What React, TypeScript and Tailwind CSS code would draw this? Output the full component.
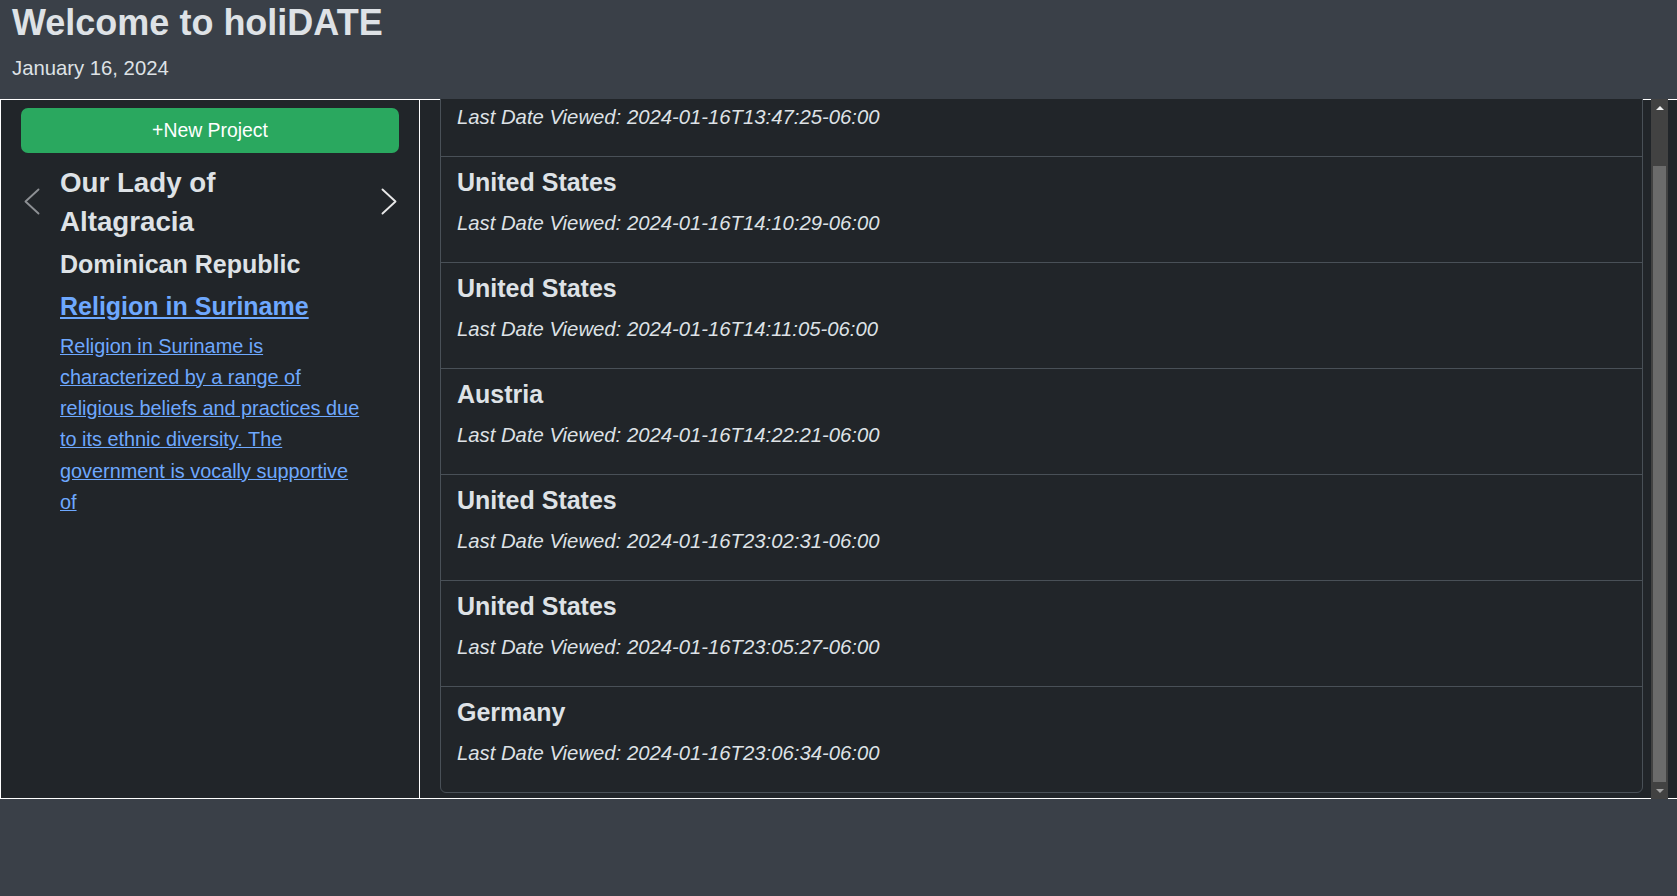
import { useEffect, useRef } from "react";

const rows = [
  { country: "United States", date: "2024-01-16T13:47:25-06:00" },
  { country: "United States", date: "2024-01-16T14:10:29-06:00" },
  { country: "United States", date: "2024-01-16T14:11:05-06:00" },
  { country: "Austria", date: "2024-01-16T14:22:21-06:00" },
  { country: "United States", date: "2024-01-16T23:02:31-06:00" },
  { country: "United States", date: "2024-01-16T23:05:27-06:00" },
  { country: "Germany", date: "2024-01-16T23:06:34-06:00" },
];

function Chevron({ dir, color }: { dir: "left" | "right"; color: string }) {
  return (
    <svg
      width="16"
      height="27"
      viewBox="0 0 16 27"
      fill="none"
      stroke={color}
      strokeWidth="1.9"
      strokeLinecap="round"
      strokeLinejoin="round"
    >
      {dir === "left" ? (
        <polyline points="14.5,1.5 1.5,13.5 14.5,25.5" />
      ) : (
        <polyline points="1.5,1.5 14.5,13.5 1.5,25.5" />
      )}
    </svg>
  );
}

export default function App() {
  const scrollRef = useRef<HTMLDivElement>(null);

  useEffect(() => {
    const el = scrollRef.current;
    if (el) el.scrollTop = el.scrollHeight;
  }, []);

  return (
    <div className="min-h-screen bg-[#3a4048] font-['Liberation_Sans',Arial,sans-serif] text-[#dee2e6]">
      <header className="h-[99px] pl-3 pt-[2px]">
        <h1 className="text-[36px] font-bold leading-[42px]">Welcome to holiDATE</h1>
        <p className="mt-[9px] text-[20.3px] leading-[30px]">January 16, 2024</p>
      </header>

      <div className="flex h-[700px] border-y border-white bg-[#212529]">
        <aside className="w-[420px] shrink-0 border-x border-white">
          <button className="mx-[20px] mt-[8px] flex h-[45px] w-[378px] items-center justify-center rounded-[7px] bg-[#2aa85f] pt-[1px] text-[19.4px] text-white">
            +New Project
          </button>

          <div className="mt-[11px] flex">
            <div className="w-[59px] shrink-0 pl-[23px] pt-[24px]">
              <Chevron dir="left" color="#8d9094" />
            </div>
            <div className="w-[304px] shrink-0">
              <h3 className="max-w-[280px] text-[27.7px] font-bold leading-[38.7px]">
                Our Lady of Altagracia
              </h3>
              <h4 className="mt-[8px] text-[25px] font-bold leading-[30px]">Dominican Republic</h4>
              <a
                href="#"
                className="mt-[11.6px] block text-[25px] font-bold leading-[30px] text-[#6ea8fe] underline"
              >
                Religion in Suriname
              </a>
              <a
                href="#"
                className="mt-[9.5px] block text-[19.87px] leading-[31.3px] text-[#6ea8fe] underline"
              >
                Religion in Suriname is characterized by a range of religious beliefs and practices due to its
                ethnic diversity. The government is vocally supportive of
              </a>
            </div>
            <div className="flex w-[55px] shrink-0 justify-end pr-[22px] pt-[24px]">
              <Chevron dir="right" color="#e8e8e8" />
            </div>
          </div>
        </aside>

        <div className="-mt-px ml-[20px] mr-[9px] flex h-[700px] flex-1 self-start">
          <div
            ref={scrollRef}
            className="flex-1 overflow-y-scroll pb-[6px] pt-[8px] [scrollbar-width:none] [&::-webkit-scrollbar]:hidden"
          >
            <ul className="mr-[8px] overflow-hidden rounded-[6px] border border-[#495057] bg-[#212529]">
              {rows.map((r, i) => (
                <li
                  key={i}
                  className={`box-content h-[105px] px-[16px] ${i > 0 ? "border-t border-[#495057]" : ""}`}
                >
                  <div className="pt-[10px]">
                    <h4 className="text-[25px] font-bold leading-[30px]">{r.country}</h4>
                    <p className="mt-[10.5px] text-[20.3px] italic leading-[30px]">
                      Last Date Viewed: {r.date}
                    </p>
                  </div>
                </li>
              ))}
            </ul>
          </div>

          <div aria-hidden className="flex w-[17px] shrink-0 flex-col bg-[#424242]">
            <div className="flex h-[17px] items-center justify-center pt-[1px]">
              <svg width="8" height="4" viewBox="0 0 8 4">
                <polygon points="4,0 8,4 0,4" fill="#f0f0f0" />
              </svg>
            </div>
            <div className="flex-1 px-[2px] pt-[50px]">
              <div className="h-full bg-[#6b6b6b]" />
            </div>
            <div className="flex h-[17px] items-center justify-center">
              <svg width="8" height="4" viewBox="0 0 8 4">
                <polygon points="0,0 8,0 4,4" fill="#a3a3a3" />
              </svg>
            </div>
          </div>
        </div>
      </div>
    </div>
  );
}
